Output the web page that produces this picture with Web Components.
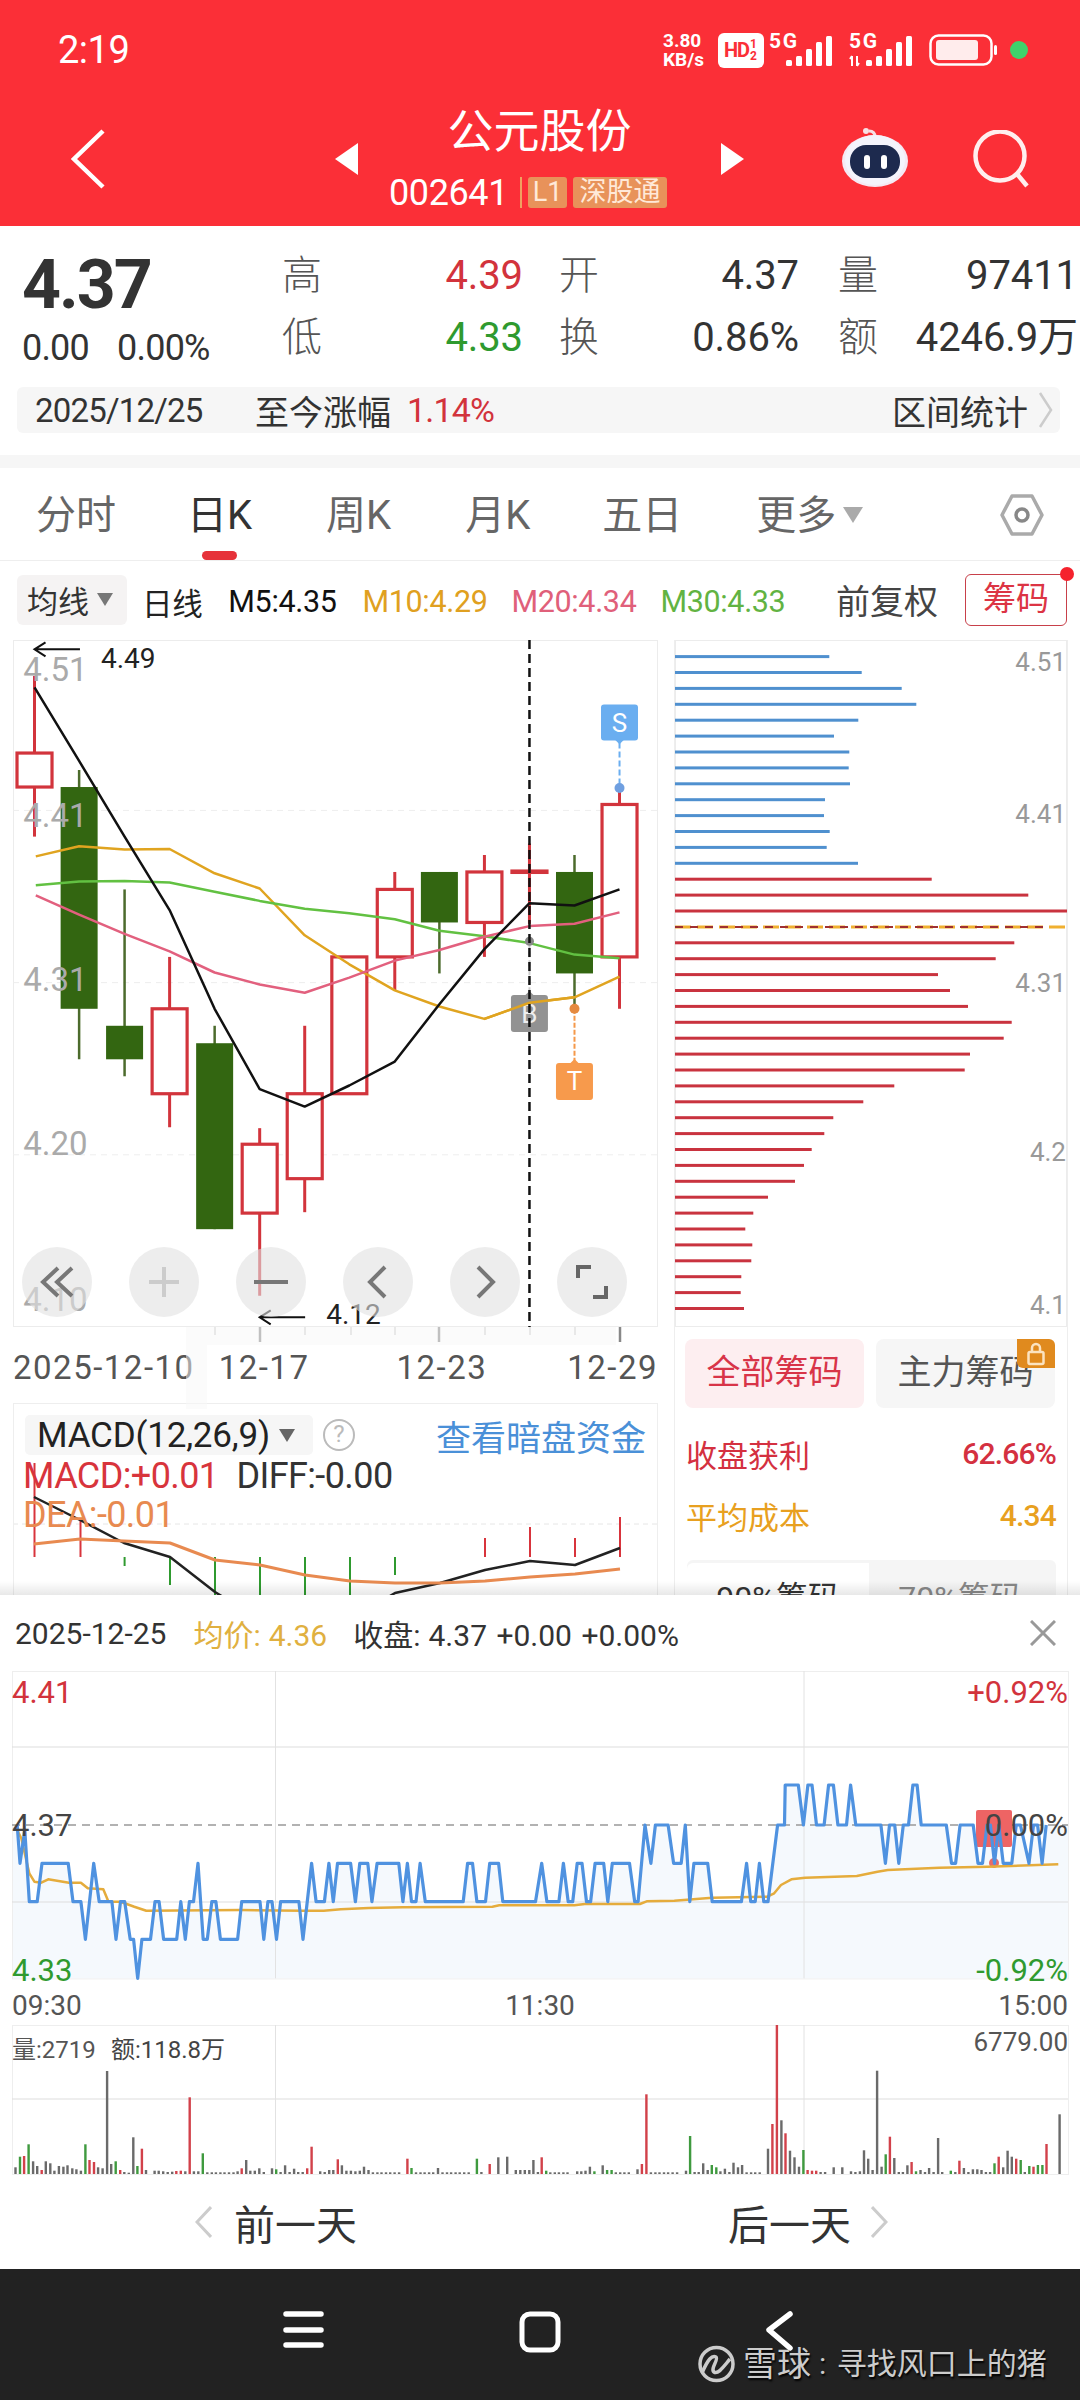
<!DOCTYPE html>
<html lang="zh">
<head>
<meta charset="utf-8">
<title>公元股份</title>
<style>
  html, body { margin: 0; padding: 0; }
  body {
    width: 1080px; height: 2400px; overflow: hidden; background: #fff;
    display: flex; flex-direction: column;
    font-family: Roboto, "Noto Sans CJK SC", sans-serif; color: #333;
  }
  main-split { flex: none; }
</style>
</head>
<body>
<status-bar></status-bar>
<stock-header name="公元股份" code="002641"></stock-header>
<quote-panel></quote-panel>
<period-tabs></period-tabs>
<ma-legend></ma-legend>
<main-split>
  <kline-panel></kline-panel>
  <chip-panel></chip-panel>
</main-split>
<intraday-sheet></intraday-sheet>
<phone-nav></phone-nav>

<script>
const RED = '#d2333c', GREEN = '#2f9a2f', CANDLE_GREEN = '#336611', CANDLE_RED = '#d2343c';
const poly = (pts, color, w, extra = '') =>
  `<polyline fill="none" stroke="${color}" stroke-width="${w}" stroke-linejoin="round" ${extra} points="${pts.map(p => p[0].toFixed(1) + ',' + p[1].toFixed(1)).join(' ')}"/>`;
const line = (x1, y1, x2, y2, color, w = 1, extra = '') =>
  `<line x1="${x1}" y1="${y1}" x2="${x2}" y2="${y2}" stroke="${color}" stroke-width="${w}" ${extra}/>`;
const label = (x, y, txt, size, color, anchor = 'start') =>
  `<text x="${x}" y="${y}" font-size="${size}" fill="${color}" text-anchor="${anchor}" dominant-baseline="central">${txt}</text>`;

class SignalIcon extends HTMLElement {
  constructor() {
    super();
    const arrows = this.hasAttribute('arrows');
    const bars = [[17, 6], [27, 10], [37, 17], [47, 24], [57, 30]];
    this.attachShadow({mode: 'open'}).innerHTML = `
      <style>:host{display:block;width:66px;height:36px} svg{display:block;margin-top:-6px}</style>
      <svg width="66" height="42" viewBox="0 -6 66 42">
        <text x="0" y="16" font-size="21" font-weight="700" fill="#fff" textLength="28">5G</text>
        ${arrows ? '<path d="M3 34V24M3 24l-2 3M8 24v10M8 34l2-3" stroke="#fff" stroke-width="2" fill="none"/>' : ''}
        ${bars.map(b => `<rect x="${b[0]}" y="${34 - b[1]}" width="6" height="${b[1]}" rx="1.5" fill="#fff"/>`).join('')}
      </svg>`;
  }
}
customElements.define('signal-icon', SignalIcon);

class StatusBar extends HTMLElement {
  constructor() {
    super();
    this.attachShadow({mode: 'open'}).innerHTML = `
    <style>
      :host{display:flex;align-items:center;height:100px;background:#fb2f37;color:#fff;padding:0 52px 0 58px;box-sizing:border-box}
      .time{font-size:38px;letter-spacing:-.5px}
      .right{margin-left:auto;display:flex;align-items:center}
      .speed{font-size:19px;font-weight:700;line-height:19px;width:47px;text-align:left}
      .hd{width:46px;height:35px;background:#fff;border-radius:6px;color:#fb2f37;font-size:20px;font-weight:700;display:flex;align-items:center;justify-content:center;margin:0 5px 0 8px;letter-spacing:-1px}
      .hd small{font-size:12px;line-height:12px;width:8px;margin-left:1px;letter-spacing:0}
      signal-icon + signal-icon{margin-left:14px}
      .bat{margin-left:14px;display:block}
      .dot{width:18px;height:18px;border-radius:50%;background:#3fd26b;margin-left:13px}
    </style>
    <div class="time">2:19</div>
    <div class="right">
      <div class="speed">3.80<br>KB/s</div>
      <div class="hd">HD<small>1 2</small></div>
      <signal-icon></signal-icon>
      <signal-icon arrows></signal-icon>
      <svg class="bat" width="68" height="32" viewBox="0 0 68 32">
        <rect x="1.5" y="1.5" width="61" height="29" rx="8" fill="none" stroke="#fff" stroke-width="2.5"/>
        <rect x="7" y="6" width="42" height="20" rx="3" fill="#ffecec"/>
        <rect x="65" y="11" width="3" height="10" rx="1.5" fill="#fff"/>
      </svg>
      <div class="dot"></div>
    </div>`;
  }
}
customElements.define('status-bar', StatusBar);

class StockHeader extends HTMLElement {
  constructor() {
    super();
    this.attachShadow({mode: 'open'}).innerHTML = `
    <style>
      :host{display:grid;grid-template-columns:335px 409px 1fr;height:126px;background:#fb2f37;color:#fff}
      .back{padding:29px 0 0 71px}
      .mid{display:flex;align-items:flex-start}
      .tri{width:0;height:0;border-top:16px solid transparent;border-bottom:16px solid transparent;margin-top:43px;flex:none}
      .tri.l{border-right:23px solid #fff}
      .tri.r{border-left:23px solid #fff}
      .col{flex:1;display:flex;flex-direction:column}
      .name{font-size:46px;line-height:50px;margin-top:6px;text-align:center}
      .code{display:flex;align-items:center;height:31px;margin:21px 0 0 31px}
      .num{font-size:36px;letter-spacing:-.4px;width:116px}
      .bar{width:2px;height:31px;background:#f0a060;margin:0 6px 0 15px}
      .tag{background:#e8925a;color:#ffe9d8;font-size:27px;line-height:31px;height:31px;border-radius:3px;text-align:center}
      .tag.a{width:39px;margin-right:6px}
      .tag.b{width:94px}
      .right{display:flex;align-items:flex-start;padding:28px 51px 0 0;justify-content:flex-end}
      .robot{margin-right:65px}
      .search{margin-top:2px}
    </style>
    <div class="back"><svg width="34" height="60" viewBox="0 0 34 60" fill="none"><path d="M32 2L3 30l29 28" stroke="#fff" stroke-width="4.5"/></svg></div>
    <div class="mid">
      <div class="tri l"></div>
      <div class="col">
        <div class="name">${this.getAttribute('name')}</div>
        <div class="code"><span class="num">${this.getAttribute('code')}</span><span class="bar"></span><span class="tag a">L1</span><span class="tag b">深股通</span></div>
      </div>
      <div class="tri r"></div>
    </div>
    <div class="right">
      <svg class="robot" width="66" height="60" viewBox="0 0 66 60">
        <path d="M27 3C31 3 33 5 33 9" stroke="#f6dfe4" stroke-width="3" fill="none"/>
        <circle cx="24" cy="3" r="3" fill="#f8e0e4"/>
        <ellipse cx="33" cy="33" rx="33" ry="26" fill="#f5e9f3"/>
        <ellipse cx="33" cy="32" rx="30" ry="25" fill="#f4f4fc"/>
        <rect x="8" y="17" width="50" height="33" rx="16" fill="#1d2a4e"/>
        <rect x="22" y="27" width="6" height="14" rx="3" fill="#fff"/>
        <rect x="39" y="27" width="6" height="14" rx="3" fill="#fff"/>
      </svg>
      <svg class="search" width="56" height="60" viewBox="0 0 56 60" fill="none" stroke="#ffeeee" stroke-width="4.500"><circle cx="27" cy="26" r="24.500"/><path d="M44 44l10 12"/></svg>
    </div>`;
  }
}
customElements.define('stock-header', StockHeader);

class QuotePanel extends HTMLElement {
  constructor() {
    super();
    this.attachShadow({mode: 'open'}).innerHTML = `
    <style>
      :host{display:block;background:#fff;border-bottom:13px solid #f6f6f6;height:242px;box-sizing:border-box;color:#333}
      .top{display:flex;height:161px}
      .left{width:282px;box-sizing:border-box;padding:25px 0 0 22px}
      .price{font-size:68px;line-height:68px;font-weight:700;letter-spacing:-2px}
      .sub{font-size:36px;line-height:40px;margin-top:9px;letter-spacing:-.8px;word-spacing:20px}
      .grid{display:grid;grid-template-columns:40px 201px 36px 40px 200px 39px 40px 200px;grid-auto-rows:62px;padding-top:19px}
      .k{font-size:40px;line-height:62px;color:#555;font-weight:300}
      .v{font-size:40px;line-height:62px;text-align:right;letter-spacing:-.1px}
      .up{color:${RED}} .dn{color:${GREEN}}
      .date{display:flex;align-items:center;height:46px;margin:0 20px 0 17px;background:#f6f6f6;border-radius:6px;font-size:34px;padding:0 6px 0 18px}
      .date .d{font-size:33px;letter-spacing:-.8px;width:220px}
      .date .pct{color:${RED};margin-left:16px;letter-spacing:-.8px}
      .date .r{margin-left:auto;display:flex;align-items:center}
      .date svg{margin-left:10px}
    </style>
    <div class="top">
      <div class="left">
        <div class="price">4.37</div>
        <div class="sub">0.00 0.00%</div>
      </div>
      <div class="grid">
        <div class="k">高</div><div class="v up">4.39</div><div></div><div class="k">开</div><div class="v">4.37</div><div></div><div class="k">量</div><div class="v">97411</div>
        <div class="k">低</div><div class="v dn">4.33</div><div></div><div class="k">换</div><div class="v">0.86%</div><div></div><div class="k">额</div><div class="v">4246.9万</div>
      </div>
    </div>
    <div class="date">
      <span class="d">2025/12/25</span><span>至今涨幅</span><span class="pct">1.14%</span>
      <span class="r">区间统计<svg width="16" height="38" viewBox="0 0 16 38" fill="none"><path d="M2 2l11 17L2 36" stroke="#ccc" stroke-width="2.5"/></svg></span>
    </div>`;
  }
}
customElements.define('quote-panel', QuotePanel);

class PeriodTabs extends HTMLElement {
  constructor() {
    super();
    const tabs = [['分时', 36], ['日K', 71, 1], ['周K', 74], ['月K', 74], ['五日', 72], ['更多', 74]];
    this.attachShadow({mode: 'open'}).innerHTML = `
    <style>
      :host{display:flex;height:93px;box-sizing:border-box;border-bottom:1px solid #eee;background:#fff;color:#666}
      .t{display:grid;grid-template-rows:1fr 9px;justify-items:center;font-size:40px;height:92px}
      .t span{align-self:center;line-height:46px;position:relative;top:6px}
      .t.on{color:#333}
      .t.on i{display:block;width:35px;height:9px;border-radius:5px;background:#e6323a}
      .tri{width:0;height:0;border-left:10px solid transparent;border-right:10px solid transparent;border-top:16px solid #aaa;margin:39px 0 0 7px}
      svg{margin:26px 36px 0 auto}
    </style>
    ${tabs.map(t => `<div class="t${t[2] ? ' on' : ''}" style="margin-left:${t[1]}px"><span>${t[0]}</span><i></i></div>`).join('')}
    <div class="tri"></div>
    <svg width="44" height="42" viewBox="0 0 44 42" fill="none"><path d="M12 2h20l10 19-10 19H12L2 21z" stroke="#aaa" stroke-width="3.5" stroke-linejoin="round"/><circle cx="22" cy="21" r="6" stroke="#888" stroke-width="3.5"/></svg>`;
  }
}
customElements.define('period-tabs', PeriodTabs);

class MaLegend extends HTMLElement {
  constructor() {
    super();
    this.attachShadow({mode: 'open'}).innerHTML = `
    <style>
      :host{display:flex;align-items:center;height:79px;background:#fff;padding:0 13px 2px 17px;box-sizing:border-box;color:#222}
      .chip{display:flex;align-items:center;width:110px;height:50px;background:#f5f3f3;border-radius:6px;font-size:31px;padding-left:10px;box-sizing:border-box;color:#333}
      .chip i{width:0;height:0;border-left:8px solid transparent;border-right:8px solid transparent;border-top:13px solid #777;margin-left:8px}
      span{font-size:30.5px;letter-spacing:-.35px;position:relative;top:2px}
      .fu{font-size:34px;margin-left:auto;color:#444;letter-spacing:0;top:0}
      .chou{position:relative;width:102px;height:52px;box-sizing:border-box;border:1.5px solid #c8404a;border-radius:6px;color:#dc3444;font-size:33px;line-height:48px;text-align:center;margin-left:27px}
      .chou::after{content:'';position:absolute;right:-8px;top:-8px;width:14px;height:14px;border-radius:50%;background:#f5222d}
    </style>
    <div class="chip">均线<i></i></div>
    <span style="margin-left:15px">日线</span>
    <span style="margin-left:26px;color:#111">M5:4.35</span>
    <span style="margin-left:26px;color:#e0a020">M10:4.29</span>
    <span style="margin-left:24px;color:#e0607a">M20:4.34</span>
    <span style="margin-left:24px;color:#62b342">M30:4.33</span>
    <span class="fu">前复权</span>
    <div class="chou">筹码</div>`;
  }
}
customElements.define('ma-legend', MaLegend);

class MainSplit extends HTMLElement {
  constructor() {
    super();
    this.attachShadow({mode: 'open'}).innerHTML = `
    <style>:host{display:flex;height:955px;overflow:hidden;background:#fff;padding-left:13px;box-sizing:border-box;gap:17px}</style>
    <slot></slot>`;
  }
}
customElements.define('main-split', MainSplit);

class KlinePanel extends HTMLElement {
  chart() {
    // coordinates below were read off the reference at its candle scale
    const X = v => v / 2.376 - 13, Y = v => 630 + v / 2.178 - 640;
    const candles = [
      [82, 'r', 100, 450, 268, 342], [188, 'g', 305, 935, 342, 825], [296, 'g', 565, 972, 862, 935],
      [403, 'r', 712, 1083, 825, 1010], [510, 'g', 862, 1305, 900, 1305], [617, 'r', 1085, 1450, 1120, 1270],
      [724, 'r', 862, 1268, 1010, 1195], [830, 'r', 712, 1010, 712, 1010], [938, 'r', 527, 785, 565, 712],
      [1044, 'g', 527, 748, 527, 637], [1151, 'r', 490, 712, 527, 637], [1258, 'r', 465, 640, 525, 528],
      [1365, 'g', 490, 825, 527, 748], [1472, 'r', 340, 825, 380, 712]
    ];
    const ma5 = [[82,125],[188,285],[296,450],[403,610],[510,825],[617,1000],[724,1038],[830,992],[938,940],[1044,815],[1151,695],[1258,595],[1365,600],[1472,565]];
    const ma10 = [[85,493],[188,471],[296,478],[403,477],[510,530],[617,563],[724,665],[830,728],[938,785],[1044,820],[1151,847],[1258,812],[1365,800],[1472,755]];
    const ma20 = [[85,578],[188,620],[296,662],[403,700],[510,746],[617,772],[724,790],[830,757],[938,720],[1044,697],[1151,668],[1258,645],[1365,640],[1472,615]];
    const ma30 = [[85,556],[188,548],[296,547],[403,550],[510,570],[617,590],[724,607],[830,617],[938,630],[1044,655],[1151,667],[1258,682],[1365,707],[1472,715]];
    const map = a => a.map(p => [X(p[0]), Y(p[1])]);
    let s = `<rect x=".5" y=".5" width="644" height="686" fill="#fff" stroke="#ececec"/>`;
    [393, 768, 1143].forEach(v => s += line(0, Y(v), 645, Y(v), '#eee', 1, 'stroke-dasharray="6 5"'));
    candles.forEach(c => {
      const x = X(c[0]), w = 35;
      if (c[1] === 'g') {
        s += line(x, Y(c[2]), x, Y(c[3]), '#4c6b2c', 2.5);
        s += `<rect x="${x - 18.5}" y="${Y(c[4])}" width="37" height="${Y(c[5]) - Y(c[4])}" fill="${CANDLE_GREEN}"/>`;
      } else {
        s += line(x, Y(c[2]), x, Y(c[4]), CANDLE_RED, 3) + line(x, Y(c[5]), x, Y(c[3]), CANDLE_RED, 3);
        s += `<rect x="${x - w / 2}" y="${Y(c[4])}" width="${w}" height="${Y(c[5]) - Y(c[4])}" fill="${c[4] + 5 > c[5] ? 'none' : '#fff'}" stroke="${CANDLE_RED}" stroke-width="3.2"/>`;
      }
    });
    [[85,'4.51'],[405,'4.41'],[762,'4.31'],[1118,'4.20'],[1458,'4.10']].forEach(a => s += label(X(55), Y(a[0]), a[1], 33, '#aaa'));
    s += poly(map(ma10), '#e0a420', 2.5) + poly(map(ma30), '#62c142', 2.5) + poly(map(ma20), '#e2607e', 2.5) + poly(map(ma5), '#111', 2.5);
    // S / B / T trade markers
    s += line(X(1472), Y(245), X(1472), Y(344), '#6aaef0', 2, 'stroke-dasharray="6 3"') + `<circle cx="${X(1472)}" cy="${Y(344)}" r="5" fill="#6f9fe0"/>`;
    s += `<rect x="${X(1428)}" y="${Y(162)}" width="37" height="36" rx="3" fill="#6aaef0"/><path d="M${X(1472) - 5} ${Y(238)}h10l-5 5z" fill="#6aaef0"/>` + label(X(1472), Y(202), 'S', 26, '#fff', 'middle');
    s += line(X(1258), Y(680), X(1258), Y(795), '#ccc', 2, 'stroke-dasharray="6 3"') + `<circle cx="${X(1258)}" cy="${Y(678)}" r="4.5" fill="#888"/>`;
    s += `<rect x="${X(1214)}" y="${Y(795)}" width="37" height="37" rx="3" fill="#929292"/><path d="M${X(1258) - 5} ${Y(797)}h10l-5 -5z" fill="#929292"/>` + label(X(1258), Y(836), 'B', 26, '#eee', 'middle');
    s += line(X(1365), Y(825), X(1365), Y(943), '#f5994a', 2, 'stroke-dasharray="5 2"') + `<circle cx="${X(1365)}" cy="${Y(825)}" r="5" fill="#e58a40"/>`;
    s += `<rect x="${X(1321)}" y="${Y(943)}" width="37" height="37" rx="3" fill="#f79a4c"/><path d="M${X(1365) - 5} ${Y(945)}h10l-5 -5z" fill="#f79a4c"/>` + label(X(1365), Y(983), 'T', 26, '#fff', 'middle');
    // redraw ma10 over the B badge, it sits in front in the reference
    s += poly(map(ma10.slice(10, 13)), '#e0a420', 2.5);
    s += line(X(1258), 0, X(1258), 687, '#111', 2.5, 'stroke-dasharray="9 5"');
    // high and low arrows
    s += `<path d="M${X(190)} ${Y(42)}H${X(82)}m11 -7l-11 7 11 7" fill="none" stroke="#111" stroke-width="2"/>` + label(X(240), Y(62), '4.49', 28, '#222');
    s += `<path d="M${X(725)} ${Y(1497)}H${X(617)}m11 -7l-11 7 11 7" fill="none" stroke="#111" stroke-width="2"/>` + label(X(775), Y(1490), '4.12', 28, '#222');
    // ticks under the frame
    [[215,0],[260,1],[305,0],[351,0],[395,0],[439,1],[485,0],[530,0],[575,0],[620,1]].forEach(t => {
      s += line(t[0] - 13, 687, t[0] - 13, t[1] ? 702 : 695, t[1] ? '#888' : '#ccc', t[1] ? 2.5 : 1.5);
    });
    return `<svg width="645" height="702" viewBox="0 0 645 702">${s}</svg>`;
  }
  macd() {
    const X = v => v - 13, Y = v => v - 1403;
    const red = [[34.5,1463],[80.5,1520],[485,1538],[530,1527],[575,1538],[620,1517]];
    const grn = [[124.6,1566],[170,1585],[215,1620],[260,1620],[305,1620],[350,1620],[395,1575]];
    const diff = [[34,1497],[80,1520],[124,1543],[170,1557],[215,1592],[260,1620],[350,1620],[395,1593],[440,1583],[485,1570],[530,1561],[575,1565],[620,1548]];
    const dea = [[34,1544],[80,1539],[124,1541],[170,1543],[215,1560],[260,1565],[305,1575],[350,1581],[395,1583],[440,1583],[485,1581],[530,1577],[575,1574],[620,1569]];
    let s = line(0, Y(1524), 645, Y(1524), '#e6e6e6', 1, 'stroke-dasharray="5 4"');
    red.forEach(b => s += line(X(b[0]), Y(b[1]), X(b[0]), Y(1557), '#d8343c', 2));
    grn.forEach(b => s += line(X(b[0]), Y(1557), X(b[0]), Y(b[1]), '#2f9a2f', 2));
    s += poly(diff.map(p => [X(p[0]), Y(p[1])]), '#222', 2.5);
    s += poly(dea.map(p => [X(p[0]), Y(p[1])]), '#e88a50', 3);
    return `<svg class="bg" width="645" height="192" viewBox="0 0 645 192">${s}</svg>`;
  }
  constructor() {
    super();
    const btn = [
      '<path d="M19 4L4 18l15 14M33 4L18 18l15 14" stroke="#777"/>',
      '<path d="M18 3v30M3 18h30" stroke="#ccc"/>',
      '<path d="M1 18h34" stroke="#777"/>',
      '<path d="M25 3L10 18l15 15" stroke="#777"/>',
      '<path d="M11 3l15 15-15 15" stroke="#777"/>',
      '<path d="M4 14V3h13M32 22v11H19" stroke="#666"/>'
    ];
    this.attachShadow({mode: 'open'}).innerHTML = `
    <style>
      :host{display:block;position:relative;width:645px;flex:none;color:#444}
      .chart{position:relative;height:702px}
      svg{display:block}
      .tools{position:absolute;left:9px;top:607px;display:flex;gap:37px}
      .tools div{width:70px;height:70px;border-radius:50%;background:rgba(225,225,225,.6);display:flex;align-items:center;justify-content:center}
      .dates{display:flex;align-items:center;height:50px;font-size:33px;color:#555;letter-spacing:1.5px}
      .dates .a{margin-left:24px} .dates .b{margin-left:87px} .dates .c{margin-left:auto}
      .macd{position:relative;height:192px;margin-top:11px;border:1px solid #eee;border-bottom:none;box-sizing:border-box;overflow:hidden}
      .bg{position:absolute;left:-1px;top:-1px}
      .fg{position:relative;padding:11px 11px 0 11px}
      .row1{display:flex;align-items:center;height:40px}
      .chip{display:flex;align-items:center;width:288px;height:40px;background:#f6f6f6;border-radius:5px;font-size:35px;color:#222;padding-left:12px;box-sizing:border-box;letter-spacing:-.2px;flex:none}
      .chip i{width:0;height:0;border-left:8px solid transparent;border-right:8px solid transparent;border-top:13px solid #666;margin-left:9px}
      .q{width:32px;height:32px;box-sizing:border-box;border:2.5px solid #bbb;border-radius:50%;color:#bbb;font-size:24px;line-height:27px;text-align:center;margin-left:10px}
      .link{margin-left:auto;color:#4a90d8;font-size:35px}
      .vals{font-size:36px;line-height:39px;letter-spacing:-.6px;margin:2px 0 0 -2px}
      .vals b{font-weight:400;color:#d8343c}
      .vals em{font-style:normal;color:#333;margin-left:18px}
      .vals u{text-decoration:none;color:#e88a50;display:block}
      .ghost{position:absolute;left:173px;top:687px;pointer-events:none}
    </style>
    <div class="chart">${this.chart()}
      <div class="tools">${btn.map(p => `<div><svg width="36" height="36" viewBox="0 0 36 36" fill="none" stroke-width="4">${p}</svg></div>`).join('')}</div>
    </div>
    <div class="dates"><span>2025-12-10</span><span class="a">12-17</span><span class="b">12-23</span><span class="c">12-29</span></div>
    <div class="macd">${this.macd()}
      <div class="fg">
        <div class="row1"><div class="chip">MACD(12,26,9)<i></i></div><div class="q">?</div><div class="link">查看暗盘资金</div></div>
        <div class="vals"><b>MACD:+0.01</b><em>DIFF:-0.00</em><u>DEA:-0.01</u></div>
      </div>
    </div>
    <svg class="ghost" width="440" height="82" viewBox="0 0 440 82"><path d="M0 0H430V18H21V82H0z" fill="#f7f7f7" fill-opacity=".5"/></svg>`;
  }
}
customElements.define('kline-panel', KlinePanel);

class ChipPanel extends HTMLElement {
  bars() {
    const ends = [507,604,724,768,594,521,567,565,569,494,491,508,499,593, 814,1104,1222,1165,1062,1006,833,869,923,1054,1030,929,913,702,609,519,492,454,431,404,323,279,255,276,273,243,241,251];
    let s = `<rect x=".5" y=".5" width="391" height="686" fill="#fff" stroke="#ececec"/>`;
    ends.forEach((e, i) => {
      const y = 630 + (58 + i * 34.63) / 2.178 - 640, w = (e - 44) / 3;
      if (i === 17) {
        s += line(0, y, 392, y, '#f0b030', 3, 'stroke-dasharray="16 6"');
        s += line(0, y, w, y, '#a03030', 2, 'stroke-dasharray="8 7"');
      } else {
        s += `<rect x="0" y="${(y - 1.5).toFixed(1)}" width="${w.toFixed(1)}" height="3" fill="${i < 14 ? '#4f90cf' : '#c9333f'}"/>`;
      }
    });
    [[22,'4.51'],[174,'4.41'],[343,'4.31'],[512,'4.2'],[665,'4.1']].forEach(a => s += label(391, a[0], a[1], 26, '#999', 'end'));
    return `<svg width="392" height="687" viewBox="0 0 392 687">${s}</svg>`;
  }
  constructor() {
    super();
    this.attachShadow({mode: 'open'}).innerHTML = `
    <style>
      :host{display:block;width:392px;flex:none;border:solid #eee;border-width:0 1px;box-sizing:content-box;margin-left:-1px;height:955px}
      svg{display:block}
      .btns{display:flex;gap:12px;margin:12px 0 0 10px}
      .btn{position:relative;width:179px;height:69px;border-radius:8px;background:#f6f6f6;color:#555;font-size:34px;line-height:66px;text-align:center}
      .btn.on{background:#fdeef0;color:#d83448}
      .lock{position:absolute;right:0;top:0;width:38px;height:29px;background:#e08a1e;border-radius:0 6px 0 6px;display:flex;align-items:center;justify-content:center}
      .stat{display:flex;justify-content:space-between;align-items:center;height:62px;margin:0 11px;font-size:31px}
      .stat b{font-weight:500;font-size:30px;letter-spacing:-.8px}
      .s1{color:#d43040;margin-top:14px} .s2{color:#e8a020}
      .seg{display:flex;height:66px;margin:14px 11px 0 12px;padding-top:3px;box-sizing:border-box;background:#f5f5f5;border-radius:6px;font-size:32px;color:#888;text-align:center;line-height:70px}
      .seg div{width:182px}
      .seg .on{background:#fff;color:#333;border-radius:6px 0 0 0}
    </style>
    ${this.bars()}
    <div class="btns">
      <div class="btn on">全部筹码</div>
      <div class="btn">主力筹码<div class="lock"><svg width="20" height="24" viewBox="0 0 20 24" fill="none" stroke="#fbe3c0" stroke-width="2.5"><path d="M6 10V6a4 4 0 018 0v4"/><rect x="2.5" y="10" width="15" height="12" rx="1.5"/></svg></div></div>
    </div>
    <div class="stat s1"><span>收盘获利</span><b>62.66%</b></div>
    <div class="stat s2"><span>平均成本</span><b>4.34</b></div>
    <div class="seg"><div class="on">90%筹码</div><div>70%筹码</div></div>`;
  }
}
customElements.define('chip-panel', ChipPanel);

class IntradaySheet extends HTMLElement {
  price() {
    const Y = v => 1600 + v / 3 - 1671;
    const L = v => v / 2.904, R = v => 540 + v / 2.904;
    const left = '50:675 58:790 72:690 85:905 108:905 122:790 198:790 212:905 235:905 248:1018 272:790 288:905 325:905 337:1018 350:905 362:905 378:1018 388:1018 400:1135 412:1018 437:1018 450:905 462:905 475:1018 513:1018 525:905 538:1018 550:905 562:905 575:790 590:1018 602:1018 615:905 627:905 640:1018 690:1018 702:905 755:905 766:1018 778:905 790:905 803:1018 815:905 868:905 880:1018 905:790 918:905 942:905 955:790 968:905 980:790 1018:790 1032:905 1045:790 1068:790 1080:905 1095:790 1158:790 1170:905 1183:790 1195:905 1208:905 1220:790 1235:905 1345:905 1358:790 1372:790 1385:905 1410:905 1422:790 1448:790 1460:905 1555:905';
    const right = '5:790 20:905 55:905 68:790 82:905 95:905 108:790 122:790 135:905 147:905 160:790 185:790 197:905 210:790 260:790 275:905 285:905 305:675 322:790 335:675 372:675 388:790 410:790 422:675 435:905 447:790 487:790 500:905 585:905 600:790 612:905 625:905 637:790 650:905 662:905 690:675 710:675 712:555 750:555 765:675 778:555 790:555 803:675 825:675 838:555 852:555 865:675 890:675 902:555 917:675 990:675 1003:790 1015:675 1030:675 1042:790 1055:675 1070:675 1083:555 1095:555 1107:675 1180:675 1195:790 1207:790 1220:675 1258:675 1272:790 1285:790 1298:675 1308:675 1320:790 1332:675 1345:790 1370:790 1383:675 1395:675 1420:790 1433:675 1445:675 1458:790 1470:675';
    const parse = (str, fx) => str.split(' ').map(p => p.split(':').map(Number)).map(p => [fx(p[0]), Y(p[1])]);
    const pts = parse(left, L).concat(parse(right, R));
    const avg = parse('50:690 62:715 85:820 100:845 120:848 140:838 170:843 200:848 235:848 255:865 300:868 315:905 350:905 390:920 425:932 700:930 880:932 940:932 990:928 1070:924 1170:922 1430:920 1450:916', L)
      .concat(parse('0:916 100:916 130:912 290:912 310:904 390:902 500:893 660:890 680:880 700:855 730:838 770:833 920:828 980:815 1010:810 1160:803 1300:800 1505:793', R));
    const bottom = Y(1135), lastY = pts[pts.length - 1][1], firstY = pts[0][1];
    let s = `<rect x="12.5" y=".5" width="1056" height="${bottom}" fill="#fff" stroke="#eee"/>`;
    s += `<polygon fill="#f5f9fd" points="13,${bottom} 13,${firstY} ${pts.map(p => p[0].toFixed(1) + ',' + p[1]).join(' ')} 1068,${lastY} 1068,${bottom}"/>`;
    s += line(12, 76, 1068, 76, '#ddd') + line(12, 231, 1068, 231, '#ddd') + line(275.5, 0, 275.5, bottom, '#e2e2e2') + line(804, 0, 804, bottom, '#e2e2e2');
    s += line(12, 154, 1068, 154, '#999', 1.5, 'stroke-dasharray="8 6"');
    s += `<rect x="976" y="139" width="36" height="37" rx="2" fill="#ee6464"/><circle cx="994" cy="192" r="5" fill="#e86a6a"/>`;
    s += poly(avg, '#e5ac3c', 2.5) + poly(pts, '#4f92e0', 3.2);
    s += label(12, 21, '4.41', 31, RED) + label(12, 154, '4.37', 31, '#444') + label(12, 299, '4.33', 31, GREEN);
    s += label(1068, 21, '+0.92%', 31, RED, 'end') + label(1068, 154, '0.00%', 31, '#444', 'end') + label(1068, 299, '-0.92%', 31, GREEN, 'end');
    return `<svg width="1080" height="320" viewBox="0 0 1080 320">${s}</svg>`;
  }
  volume() {
    const Y = v => 2000 + v / 3 - 2025;
    const tiny = (a, b) => { let o = []; for (let x = a; x <= b; x += 12.6) o.push(x.toFixed(0) + 'k517'); return o.join(' '); };
    const left = `45k502 58g470 70r468 83g433 96k484 108k498 121r510 133k484 146k490 158k512 171k498 184k500 196k496 210k505 222k508 235k512 248g433 260r480 273r486 285k502 298k505 311k213 323k492 336g484 349r510 361k516 374k518 387k412 399g498 412r446 424k510 449k512 461k512 474k514 487k516 500k515 512r513 525r512 538k514 551r292 563k514 576k514 589g460 ${tiny(602, 680)} 690k514 702r505 715k480 727k512 740k512 753k505 766k516 790k505 802g508 815k516 828k496 841k516 854k506 866k516 879k516 892r505 905r440 930k514 943k516 956k510 968k510 981r478 993k496 1006k512 1019k512 1032k514 1045k512 1057k500 1070k510 ${tiny(1083, 1170)} 1183r476 1195g504 ${tiny(1208, 1260)} 1272k504 ${tiny(1285, 1372)} 1385g476 1398k516 1422r492 1447k472 1473k470 1498k510 1511k510 1524k510 1537k510 1549k480 1562k516`;
    const right = `5r472 18g512 ${tiny(30, 85)} 108k514 120k514 132k512 145k500 158g514 182k496 195g510 208g510 ${tiny(220, 270)} 283k508 296r492 309r283 ${tiny(322, 410)} 424k512 436g408 449k516 461k516 474k490 487k510 499g495 512g502 524k514 537k506 550k516 562k488 575k502 587k495 ${tiny(600, 650)} 662k446 675r372 688r75 701k361 713r400 726k452 739k472 752k500 765g450 777r510 790r512 802r512 815k516 828k516 853k502 878k502 903k514 916k516 929k514 941k451 953k476 966k510 979k212 992k500 1004g463 1016r410 1029k474 1042k516 1054k516 1067k496 1079r486 1092g514 1105k510 1118k516 1130k504 1143k516 1156k414 1168k516 1193g512 1206k516 1218r482 1231k504 1244k516 1257k508 1270k508 1282k510 1295k516 1307k516 1320g490 1332r470 1345k502 1358k452 1370k470 1383r476 1396g480 1408k516 1421g498 1433r500 1446g495 1459g495 1471r432 1509k343`;
    const colors = {k: '#6a6a6a', r: '#d2414a', g: '#3f9a3f'};
    const bars = (str, fx) => str.split(' ').map(t => {
      const m = t.match(/(\d+)([krg])(\d+)/);
      return `<rect x="${(fx(+m[1]) - 1.2).toFixed(1)}" y="${Y(+m[3]).toFixed(1)}" width="2.4" height="${(149 - Y(+m[3])).toFixed(1)}" fill="${colors[m[2]]}"/>`;
    }).join('');
    let s = `<rect x="12.5" y=".5" width="1056" height="149" fill="#fff" stroke="#eee"/>`;
    s += line(12, 74, 1068, 74, '#ddd') + line(275.5, 0, 275.5, 149, '#e2e2e2') + line(804, 0, 804, 149, '#e2e2e2');
    s += bars(left, v => v / 2.904) + bars(right, v => 540 + v / 2.904);
    s += label(12, 25, '量:2719', 24, '#555') + label(111, 25, '额:118.8万', 24, '#444') + label(1068, 17, '6779.00', 26, '#555', 'end');
    return `<svg width="1080" height="150" viewBox="0 0 1080 150">${s}</svg>`;
  }
  constructor() {
    super();
    this.attachShadow({mode: 'open'}).innerHTML = `
    <style>
      :host{display:block;position:relative;height:674px;background:#fff;color:#333}
      :host::before{content:'';position:absolute;left:0;right:0;top:-14px;height:14px;background:linear-gradient(rgba(0,0,0,0),rgba(0,0,0,.09))}
      svg{display:block}
      .head{display:flex;align-items:center;height:76px;padding:0 24px 0 15px;font-size:30px}
      .head span{white-space:pre}
      .avg{color:#e0b040;margin-left:27px}
      .avg i,.close i{font-style:normal;margin-left:8px}
      .close i{word-spacing:2px}
      .close{margin-left:26px}
      .x{margin-left:auto}
      .axis{display:flex;justify-content:space-between;align-items:center;height:28px;padding:0 12px 6px;font-size:28px;color:#555;box-sizing:content-box}
      .days{display:flex;align-items:center;height:94px;font-size:41px;color:#333}
      .days .p{margin-left:195px;display:flex;align-items:center;gap:22px}
      .days .n{margin-left:371px;display:flex;align-items:center;gap:20px}
    </style>
    <div class="head">
      <span>2025-12-25</span>
      <span class="avg">均价:<i>4.36</i></span>
      <span class="close">收盘:<i>4.37 +0.00 +0.00%</i></span>
      <svg class="x" width="26" height="26" viewBox="0 0 26 26" stroke="#999" stroke-width="3"><path d="M1 1l24 24M25 1L1 25"/></svg>
    </div>
    ${this.price()}
    <div class="axis"><span>09:30</span><span>11:30</span><span>15:00</span></div>
    ${this.volume()}
    <div class="days">
      <div class="p"><svg width="17" height="32" viewBox="0 0 17 32" fill="none" stroke="#ccc" stroke-width="3"><path d="M16 1L2 16l14 15"/></svg>前一天</div>
      <div class="n">后一天<svg width="17" height="32" viewBox="0 0 17 32" fill="none" stroke="#ccc" stroke-width="3"><path d="M1 1l14 15L1 31"/></svg></div>
    </div>`;
  }
}
customElements.define('intraday-sheet', IntradaySheet);

class PhoneNav extends HTMLElement {
  constructor() {
    super();
    this.attachShadow({mode: 'open'}).innerHTML = `
    <style>
      :host{display:flex;position:relative;height:131px;background:#222;box-sizing:border-box;padding-top:42px;align-items:flex-start}
      svg{display:block}
      .ham{margin-left:283px}
      .sq{margin-left:195px}
      .bk{margin-left:204px}
      .mark{position:absolute;left:698px;top:75px;display:flex;align-items:center;color:#ccc;font-size:30px;line-height:40px;text-shadow:1px 2px 2px #000;white-space:nowrap}
      .mark b{font-weight:400;font-size:34px;margin:0 8px}
      .mark span{word-spacing:3px}
    </style>
    <svg class="ham" width="41" height="39" viewBox="0 0 41 39" stroke="#fff" stroke-width="5.5" stroke-linecap="round"><path d="M3 3h35M3 19h35M3 34h35"/></svg>
    <svg class="sq" width="42" height="42" viewBox="0 0 42 42" fill="none" stroke="#fff" stroke-width="5"><rect x="3" y="3" width="36" height="36" rx="8"/></svg>
    <svg class="bk" width="28" height="40" viewBox="0 0 28 40" fill="none" stroke="#fff" stroke-width="5.5" stroke-linecap="round" stroke-linejoin="round"><path d="M25 3L4 19l21 18"/></svg>
    <div class="mark">
      <svg width="37" height="38" viewBox="0 0 37 38" fill="none" stroke="#ccc" stroke-width="3.5"><circle cx="18.500" cy="19" r="16.500"/><path d="M4 28C10 14 14 10 18 12c3 2-6 12-2 15 4 3 10-6 16-13"/></svg>
      <b>雪球</b><span>: 寻找风口上的猪</span>
    </div>`;
  }
}
customElements.define('phone-nav', PhoneNav);
</script>
</body>
</html>
